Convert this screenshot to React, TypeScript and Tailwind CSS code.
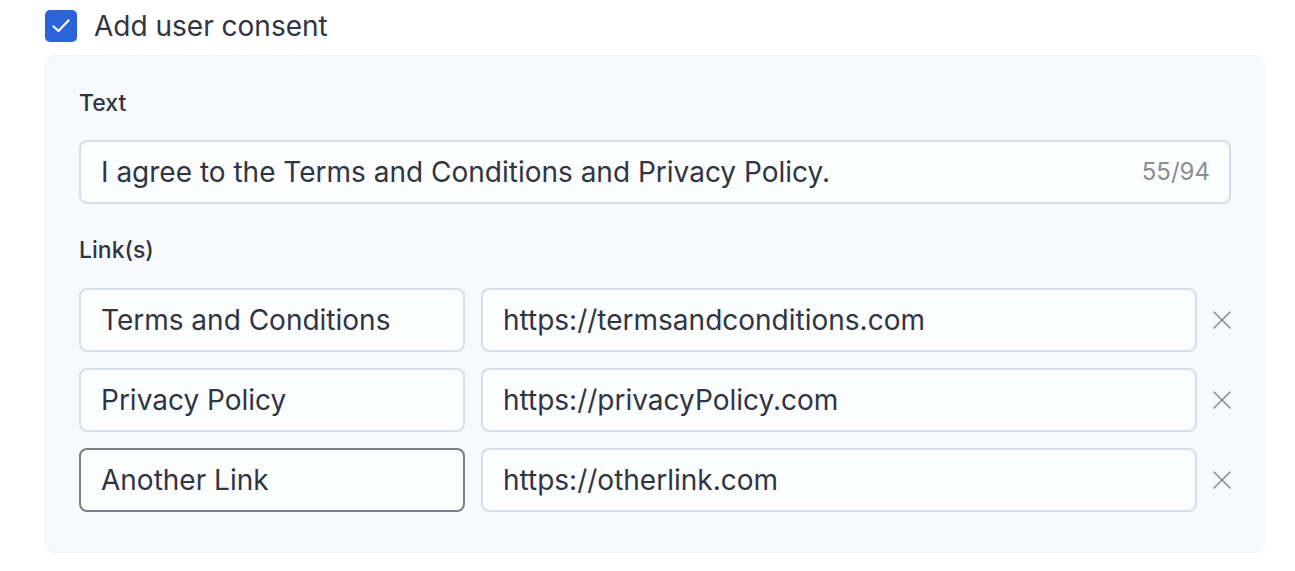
import React from 'react'

const links = [
  { label: 'Terms and Conditions', url: 'https://termsandconditions.com', active: false },
  { label: 'Privacy Policy', url: 'https://privacyPolicy.com', active: false },
  { label: 'Another Link', url: 'https://otherlink.com', active: true },
]

function CloseIcon() {
  return (
    <svg width="18" height="18" viewBox="0 0 18 18" fill="none" stroke="#8a8d93" strokeWidth="1.6" strokeLinecap="round">
      <path d="M1 1L17 17M17 1L1 17" />
    </svg>
  )
}

export default function App() {
  return (
    <div className="w-[1295px] h-[571px] bg-white text-[#2f3542]" style={{ fontFamily: 'Inter, "Noto Sans", sans-serif' }}>
      <div className="pl-[45px] pt-[10px] pr-[30px]">
        {/* Checkbox row */}
        <div className="flex items-center gap-[17px] h-[32px]">
          <div className="w-[32px] h-[32px] rounded-[5px] bg-[#2b63d9] flex items-center justify-center">
            <svg width="18" height="14" viewBox="0 0 18 14" fill="none" stroke="white" strokeWidth="2.2" strokeLinecap="round" strokeLinejoin="round">
              <path d="M1.5 7.5L6.5 12L16.5 1.5" />
            </svg>
          </div>
          <span className="text-[28px] leading-[32px]">Add user consent</span>
        </div>

        {/* Panel */}
        <div className="mt-[13px] w-[1220px] h-[498px] bg-[#f8f9fc] rounded-[10px] border border-[#f1f3f8] px-[33px] pt-[33px]">
          <div className="text-[23px] leading-[28px] font-medium">Text</div>
          <div className="mt-[23px] h-[64px] rounded-[8px] border-2 border-[#d7dcea] bg-[#fcfdfe] flex items-center justify-between pl-[20px] pr-[19px]">
            <span className="text-[28px]">I agree to the Terms and Conditions and Privacy Policy.</span>
            <span className="text-[24px] text-[#8a8d93]">55/94</span>
          </div>

          <div className="mt-[32px] text-[23px] leading-[28px] font-medium">Link(s)</div>
          <div className="mt-[24px] flex flex-col gap-[16px]">
            {links.map((l) => (
              <div key={l.label} className="flex items-center">
                <div
                  className={
                    l.active
                      ? 'w-[386px] h-[64px] rounded-[8px] border-2 border-[#7b7e86] bg-[#fcfdfe] flex items-center pl-[20px]'
                      : 'w-[386px] h-[64px] rounded-[8px] border-2 border-[#d7dcea] bg-[#fcfdfe] flex items-center pl-[20px]'
                  }
                >
                  <span className="text-[28px]">{l.label}</span>
                </div>
                <div className="ml-[16px] w-[716px] h-[64px] rounded-[8px] border-2 border-[#d7dcea] bg-[#fcfdfe] flex items-center pl-[20px]">
                  <span className="text-[28px]">{l.url}</span>
                </div>
                <div className="ml-[16px] w-[18px] flex items-center justify-center">
                  <CloseIcon />
                </div>
              </div>
            ))}
          </div>
        </div>
      </div>
    </div>
  )
}
